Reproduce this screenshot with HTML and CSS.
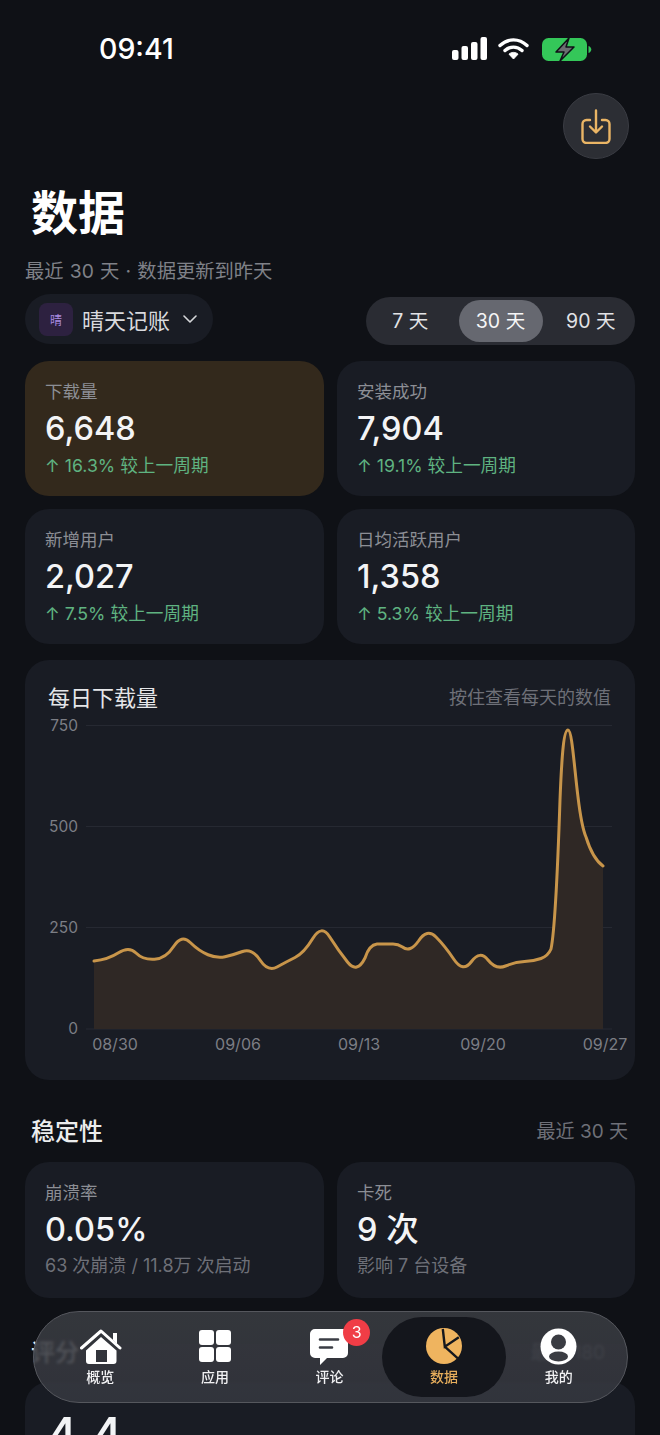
FILE: index.html
```html
<!DOCTYPE html>
<html lang="zh-CN">
<head>
<meta charset="utf-8">
<title>数据</title>
<link rel="stylesheet" href="styles.css">
</head>
<body>
<div class="screen">
  <header class="status">
    <span class="time">09:41</span>
    <div class="status-icons">
      <svg class="sig" width="35" height="24" viewBox="0 0 35 24"><rect x="0" y="13" width="6.500" height="10" rx="2"/><rect x="9.500" y="9" width="6.500" height="14" rx="2"/><rect x="19" y="5" width="6.500" height="18" rx="2"/><rect x="28.500" y="0" width="6.500" height="23" rx="2"/></svg>
      <svg class="wifi" width="31" height="24" viewBox="0 0 31 24"><path d="M2 8.500C10 1 21 1 29 8.500M7 13.500C12 9 19 9 24 13.500" fill="none" stroke="#fff" stroke-width="3.400" stroke-linecap="round"/><path d="M11 17.200C13.500 14.800 17.500 14.800 20 17.200L15.500 22Z" fill="#fff" stroke="#fff" stroke-linejoin="round"/></svg>
      <svg class="batt" width="50" height="24" viewBox="0 0 50 24"><rect x="0" y="1" width="45" height="23" rx="6.500" fill="#34c759"/><path d="M46.500 9v7c1.800-.6 2.800-2 2.800-3.500S48.300 9.600 46.500 9Z" fill="#34c759"/><path d="M27 1 14 15h8l-4 9 14-14h-8l3-9Z" fill="#6a6d70" stroke="#0f1116" stroke-width="1.500" stroke-linejoin="round"/></svg>
    </div>
  </header>

  <div class="action-row">
    <button class="round-btn" type="button" aria-label="导出">
      <svg width="32" height="36" viewBox="0 -1 32 36" fill="none" stroke="#eab565" stroke-width="2.400" stroke-linecap="round" stroke-linejoin="round"><path d="M10 11H6.500A4 4 0 0 0 2.500 15v15a4 4 0 0 0 4 4h19a4 4 0 0 0 4-4V15a4 4 0 0 0-4-4H22"/><path d="M16 1.500V23M10 17.500l6 6 6-6"/></svg>
    </button>
  </div>

  <h1 class="page-title">数据</h1>
  <p class="subtitle">最近 30 天 · 数据更新到昨天</p>

  <div class="controls">
    <div class="app-picker">
      <span class="app-icon">晴</span>
      <span class="app-name">晴天记账</span>
      <svg width="14" height="8" viewBox="0 0 14 8" fill="none" stroke="#d6d7da" stroke-width="1.600" stroke-linecap="round" stroke-linejoin="round"><path d="M1 1l6 6 6-6"/></svg>
    </div>
    <div class="segments">
      <span class="seg seg-first">7 天</span>
      <span class="seg seg-on">30 天</span>
      <span class="seg seg-last">90 天</span>
    </div>
  </div>

  <section class="grid">
    <div class="card card-hot">
      <div class="card-label">下载量</div>
      <div class="card-value">6,648</div>
      <div class="card-delta">↑ 16.3% 较上一周期</div>
    </div>
    <div class="card">
      <div class="card-label">安装成功</div>
      <div class="card-value">7,904</div>
      <div class="card-delta">↑ 19.1% 较上一周期</div>
    </div>
    <div class="card">
      <div class="card-label">新增用户</div>
      <div class="card-value">2,027</div>
      <div class="card-delta">↑ 7.5% 较上一周期</div>
    </div>
    <div class="card">
      <div class="card-label">日均活跃用户</div>
      <div class="card-value">1,358</div>
      <div class="card-delta">↑ 5.3% 较上一周期</div>
    </div>
  </section>

  <section class="chart-card">
    <div class="chart-head">
      <span class="chart-title">每日下载量</span>
      <span class="chart-hint">按住查看每天的数值</span>
    </div>
    <svg class="chart" width="610" height="345" viewBox="25 715 610 345">
      <g class="gridlines">
        <line x1="86" x2="612" y1="725.500" y2="725.500"/>
        <line x1="86" x2="612" y1="826.500" y2="826.500"/>
        <line x1="86" x2="612" y1="927.500" y2="927.500"/>
        <line x1="86" x2="612" y1="1029" y2="1029"/>
      </g>
      <path class="area" d="M94 961Q108 959.500 118.500 952.750Q129 946 136 953Q143 960 154.500 959.250Q166 958.500 173.750 946.250Q181.500 934 190.250 942.500Q199 951 208 954.750Q217 958.500 225 956.750Q233 955 242.500 951.500Q252 948 260 960Q268 972 277 967Q286 962 295 957.500Q304 953 312.750 938.500Q321.500 924 329.750 937Q338 950 347.500 962Q357 974 365 958Q369 945 377 944L393 944Q398 944 402.500 947Q410 953 418.500 941Q427 928 436 937Q445 946 454 959.500Q463 973 471.500 961.500Q480 950 488 960Q496 970 505.500 966Q515 962 524.500 961.500Q534 961 541 958.500Q548 956 551 949C555 930 558 860 560 800C562 750 564 730 568 730C572 730 574 765 578 797C581 822 583 830 586 837C590 850 596 861 603 866L603 1029L94 1029Z"/>
      <path class="line" d="M94 961Q108 959.500 118.500 952.750Q129 946 136 953Q143 960 154.500 959.250Q166 958.500 173.750 946.250Q181.500 934 190.250 942.500Q199 951 208 954.750Q217 958.500 225 956.750Q233 955 242.500 951.500Q252 948 260 960Q268 972 277 967Q286 962 295 957.500Q304 953 312.750 938.500Q321.500 924 329.750 937Q338 950 347.500 962Q357 974 365 958Q369 945 377 944L393 944Q398 944 402.500 947Q410 953 418.500 941Q427 928 436 937Q445 946 454 959.500Q463 973 471.500 961.500Q480 950 488 960Q496 970 505.500 966Q515 962 524.500 961.500Q534 961 541 958.500Q548 956 551 949C555 930 558 860 560 800C562 750 564 730 568 730C572 730 574 765 578 797C581 822 583 830 586 837C590 850 596 861 603 866"/>
      <g class="y-labels">
        <text x="78" y="731">750</text>
        <text x="78" y="832">500</text>
        <text x="78" y="933">250</text>
        <text x="78" y="1034">0</text>
      </g>
      <g class="x-labels">
        <text x="115" y="1050">08/30</text>
        <text x="238" y="1050">09/06</text>
        <text x="359" y="1050">09/13</text>
        <text x="483" y="1050">09/20</text>
        <text x="605" y="1050">09/27</text>
      </g>
    </svg>
  </section>

  <div class="section-head">
    <h2 class="section-title">稳定性</h2>
    <span class="section-note">最近 30 天</span>
  </div>
  <section class="grid">
    <div class="card card-tall">
      <div class="card-label">崩溃率</div>
      <div class="card-value">0.05%</div>
      <div class="card-note">63 次崩溃 / 11.8万 次启动</div>
    </div>
    <div class="card card-tall">
      <div class="card-label">卡死</div>
      <div class="card-value">9 次</div>
      <div class="card-note">影响 7 台设备</div>
    </div>
  </section>

  <div class="section-head section-head-rating">
    <h2 class="section-title">评分</h2>
    <span class="section-note section-note-rating">最近 180</span>
  </div>
  <section class="rating-card">
    <div class="rating-value">4.4</div>
  </section>

  <nav class="tabbar">
    <div class="tab">
      <svg width="44" height="38" viewBox="0 0 44 38"><path d="M3.500 20 23 3l19 17" fill="none" stroke="#fff" stroke-width="3" stroke-linecap="round" stroke-linejoin="round"/><path d="M35 5h4v11l-4-4Z" fill="#fff"/><path fill-rule="evenodd" d="M23 9 38.500 22.500V33a3 3 0 0 1-3 3H11a3 3 0 0 1-3-3V22.500ZM18 22v12h11V22Z" fill="#fff"/></svg>
      <span class="tab-label">概览</span>
    </div>
    <div class="tab">
      <svg width="38" height="38" viewBox="0 0 38 38" fill="#fff"><rect x="3" y="2" width="15" height="15" rx="3"/><rect x="20" y="2" width="15" height="15" rx="3"/><rect x="3" y="19" width="15" height="15" rx="3"/><rect x="20" y="19" width="15" height="15" rx="3"/></svg>
      <span class="tab-label">应用</span>
    </div>
    <div class="tab">
      <svg width="42" height="38" viewBox="0 0 42 38"><path d="M7 1h28a5 5 0 0 1 5 5v19a5 5 0 0 1-5 5H19l-7 7v-7H7a5 5 0 0 1-5-5V6a5 5 0 0 1 5-5Z" fill="#fff"/><path d="M12 11.500h18M12 19.500h12" stroke="#3a3d44" stroke-width="2.600" stroke-linecap="round"/></svg>
      <span class="badge">3</span>
      <span class="tab-label">评论</span>
    </div>
    <div class="tab tab-on">
      <svg width="38" height="38" viewBox="0 0 38 38"><circle cx="19" cy="18" r="18" fill="#efb45f"/><path d="M17.800 1 19.800 18.700 33.800 9.300M19.800 18.700 32.800 30.300" fill="none" stroke="#15171d" stroke-width="2.400"/></svg>
      <span class="tab-label">数据</span>
    </div>
    <div class="tab">
      <svg width="38" height="38" viewBox="0 0 38 38"><circle cx="18.500" cy="18.500" r="18" fill="#fff"/><circle cx="18.500" cy="14" r="7.500" fill="#3a3c42"/><ellipse cx="18.500" cy="28.500" rx="9.500" ry="5" fill="#3a3c42"/></svg>
      <span class="tab-label">我的</span>
    </div>
  </nav>
</div>
</body>
</html>
```

FILE: styles.css
```css
* { box-sizing: border-box; }
html, body { margin: 0; padding: 0; background: #0f1116; }
body {
  font-family: Inter, "Noto Sans CJK SC", "Noto Sans", sans-serif;
  color: #f3f4f6;
}
.screen {
  position: relative;
  width: 660px;
  height: 1435px;
  overflow: hidden;
  padding: 0 25px;
  background: #0f1116;
}
.status {
  display: flex;
  justify-content: space-between;
  align-items: center;
  height: 32px;
  margin-top: 33px;
  padding: 0 43px 0 74px;
}
.time { font-size: 28.500px; font-weight: 500; color: #fff; line-height: 32px; }
.status-icons { display: flex; align-items: center; gap: 11px; }
.batt { margin-left: 2px; }
.sig { fill: #fff; }
.action-row {
  display: flex;
  justify-content: flex-end;
  margin-top: 28px;
  padding-right: 6px;
}
.round-btn {
  display: flex;
  align-items: center;
  justify-content: center;
  width: 66px;
  height: 66px;
  padding: 0;
  border-radius: 50%;
  border: 1px solid #3a3c43;
  background: #2c2e34;
}
.page-title {
  margin: 20px 0 0 6px;
  font-size: 47px;
  line-height: 68px;
  font-weight: 700;
  color: #fff;
}
.subtitle {
  margin: 11px 0 0;
  font-size: 19.300px;
  line-height: 26px;
  word-spacing: 0.800px;
  color: #7f8188;
}
.controls {
  display: flex;
  justify-content: space-between;
  align-items: center;
  margin-top: 9px;
  height: 52px;
}
.app-picker {
  display: flex;
  align-items: center;
  height: 50px;
  width: 188px;
  padding: 0 14px;
  border-radius: 25px;
  background: #191c24;
}
.app-icon {
  display: flex;
  align-items: center;
  justify-content: center;
  width: 34px;
  height: 33px;
  border-radius: 8px;
  background: #2d2140;
  color: #a98be0;
  font-size: 12px;
}
.app-name { margin: 0 13px 0 9px; font-size: 22px; color: #d9dade; white-space: nowrap; }
.segments {
  display: flex;
  align-items: center;
  width: 269px;
  height: 48px;
  margin-top: 3px;
  padding: 3px;
  border-radius: 24px;
  background: #2a2c33;
}
.seg {
  flex: 1;
  height: 42px;
  line-height: 42px;
  text-align: center;
  border-radius: 21px;
  font-size: 19.500px;
  color: #e2e3e6;
  white-space: nowrap;
}
.seg-first { padding-right: 7px; }
.seg-last { padding-left: 7px; }
.seg-on { background: #666870; color: #f6f6f7; flex: 0 0 84px; }
.grid {
  display: grid;
  grid-template-columns: 299px 298px;
  gap: 13px;
  margin-top: 16px;
}
.card {
  height: 135px;
  padding: 19px 20px 0;
  border-radius: 24px;
  background: #191c24;
}
.card-tall { height: 136px; }
.card-hot { background: #33291c; }
.card-label { font-size: 17.500px; line-height: 24px; color: #8c8e95; }
.card-value {
  margin-top: 3px;
  font-size: 32.500px;
  line-height: 44px;
  font-weight: 500;
  color: #f3f4f6;
}
.card-delta { margin-top: 2px; font-size: 17.700px; line-height: 26px; color: #5fb381; white-space: nowrap; }
.card-note { margin-top: 1px; font-size: 18px; line-height: 26px; color: #6e7078; white-space: nowrap; }
.chart-card {
  height: 420px;
  margin-top: 16px;
  padding-top: 22px;
  border-radius: 24px;
  background: #191c24;
}
.chart-head {
  display: flex;
  justify-content: space-between;
  align-items: center;
  height: 28px;
  padding: 0 24px 0 23px;
  margin-bottom: 5px;
}
.chart-title { font-size: 22px; color: #e5e6e9; }
.chart-hint { font-size: 18px; color: #6e7078; }
.chart { display: block; }
.gridlines line { stroke: #262932; stroke-width: 1; }
.area { fill: #2f2825; }
.line { fill: none; stroke: #c8954a; stroke-width: 3; stroke-linecap: round; stroke-linejoin: round; }
.y-labels text { font-size: 15.500px; fill: #7c7e85; text-anchor: end; }
.x-labels text { font-size: 16px; fill: #7c7e85; text-anchor: middle; }
.section-head {
  display: flex;
  justify-content: space-between;
  align-items: center;
  height: 36px;
  margin-top: 31px;
  padding: 0 7px 0 6px;
}
.section-head + .grid { margin-top: 15px; }
.section-title { margin: 0; font-size: 24px; font-weight: 500; color: #eceded; }
.section-note { font-size: 19px; color: #6e7078; }
.section-note-rating { margin-right: 23px; }
.section-head-rating { margin-top: 34px; }
.rating-card {
  height: 120px;
  margin-top: 14px;
  padding: 26px 21px 0;
  border-radius: 24px;
  background: #191c24;
}
.rating-value { font-size: 48.500px; line-height: 54px; font-weight: 500; color: #f3f4f6; }
.tabbar {
  position: absolute;
  left: 33px;
  top: 1311px;
  width: 595px;
  height: 92px;
  display: flex;
  align-items: stretch;
  padding: 5px 9px;
  border-radius: 46px;
  border: 1px solid #55575d;
  background: linear-gradient(rgba(58, 60, 66, 0.88), rgba(54, 56, 64, 0.85));
  backdrop-filter: blur(1.500px);
}
.tab {
  position: relative;
  flex: 0 0 114.600px;
  display: flex;
  flex-direction: column;
  align-items: center;
  padding-top: 11px;
}
.tab svg { display: block; }
.tab-label { margin-top: 2px; font-size: 14px; line-height: 18px; color: #f1f1f3; font-weight: 500; }
.tab-on { flex-basis: 124.600px; margin: 0 -5px; background: #14161c; border-radius: 40px; }
.tab-on .tab-label { color: #e7ae5c; }
.badge {
  position: absolute;
  left: 71px;
  top: 2px;
  width: 27px;
  height: 27px;
  line-height: 27px;
  text-align: center;
  border-radius: 50%;
  background: #f03d46;
  color: #fff;
  font-size: 16px;
}
```
